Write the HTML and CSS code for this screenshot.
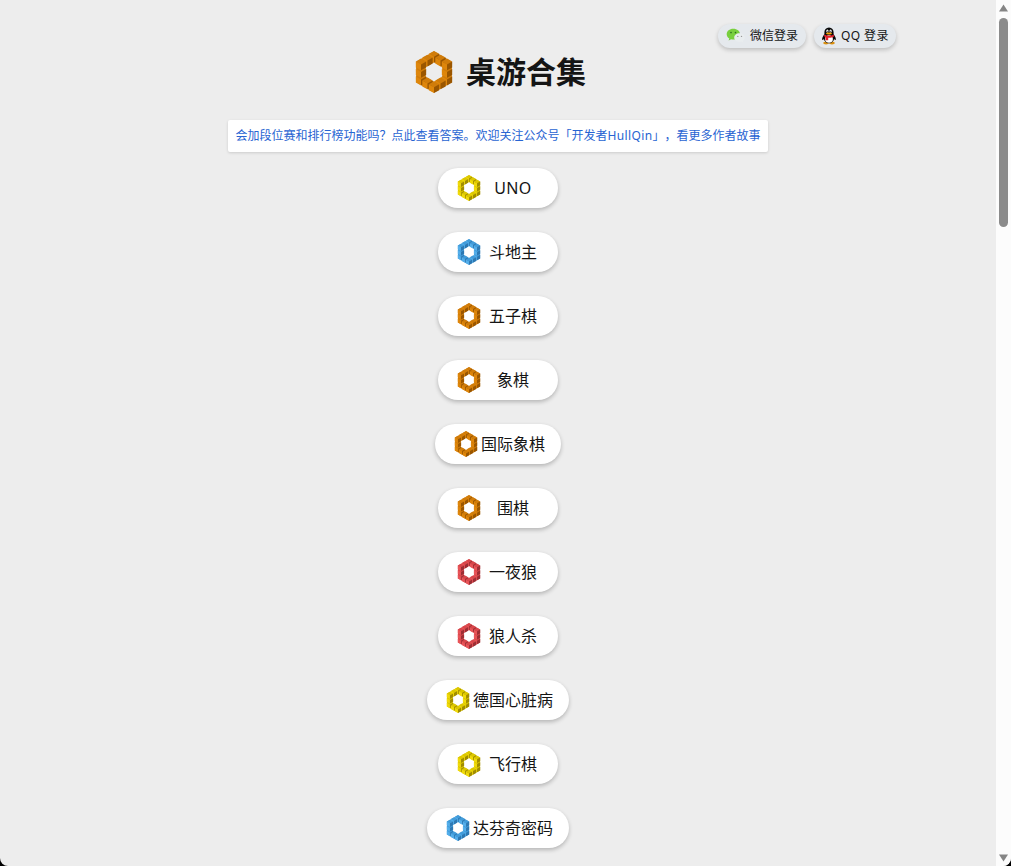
FILE: index.html
```html
<!DOCTYPE html>
<html lang="zh-CN">
<head>
  <meta charset="UTF-8" />
  <meta name="viewport" content="width=device-width, initial-scale=1.0"/>
  <title>桌游合集</title>
  <link rel="stylesheet" href="styles.css">
</head>
<body>
  <!-- shared icon: ring of twelve cubes, colours come from the class on the svg -->
  <svg class="defs" width="0" height="0">
    <symbol id="cube" viewBox="-16 -18 32 36" overflow="visible">
      <path class="top" d="M0-17.5 15.5-9 0 0-15.5-9Z"/>
      <path class="left" d="M-15.5-9 0 0V17.5L-15.5 9Z"/>
      <path class="right" d="M15.5-9 0 0V17.5L15.5 9Z"/>
    </symbol>
    <symbol id="ring" viewBox="-63 -63 126 126">
      <path class="base" fill-rule="evenodd" d="M0-62 53.500-31V31L0 62-53.500 31V-31ZM0-29-25-14.500V14.500L0 29 25 14.500V-14.500Z"/>
      <use href="#cube" x="-55" y="4.8" width="32" height="36"/>
      <use href="#cube" x="-55" y="-18" width="32" height="36"/>
      <use href="#cube" x="23" y="4.8" width="32" height="36"/>
      <use href="#cube" x="23" y="-18" width="32" height="36"/>
      <use href="#cube" x="-16" y="-63.5" width="32" height="36"/>
      <use href="#cube" x="-35.5" y="-52.2" width="32" height="36"/>
      <use href="#cube" x="3.5" y="-52.2" width="32" height="36"/>
      <use href="#cube" x="-55" y="-40.8" width="32" height="36"/>
      <use href="#cube" x="23" y="-40.8" width="32" height="36"/>
      <use href="#cube" x="-35.5" y="16.2" width="32" height="36"/>
      <use href="#cube" x="3.5" y="16.2" width="32" height="36"/>
      <use href="#cube" x="-16" y="27.5" width="32" height="36"/>
    </symbol>
  </svg>

  <main class="page">
    <div class="login">
      <button class="login-btn wechat">
        <svg width="20" height="16" viewBox="0 0 20 16">
          <path d="M7.3.8C3.5.8.7 3.1.7 6.2c0 1.8 1 3.3 2.6 4.3l-.7 2 2.5-1.2c.8.2 1.4.3 2.2.3 3.8 0 6.7-2.3 6.7-5.4S11.1.8 7.3.8Z" fill="#78cf3e"/>
          <path d="M13.5 5.2c-3 0-5.3 1.9-5.3 4.3s2.3 4.4 5.3 4.4l1.7-.3 2 1-.5-1.7c1.3-.8 2.1-2 2.1-3.4 0-2.4-2.3-4.3-5.3-4.3Z" fill="#e9edef"/>
          <circle cx="5" cy="4.6" r=".8" fill="#2d6e1e"/>
          <circle cx="9.5" cy="4.6" r=".8" fill="#2d6e1e"/>
          <circle cx="11.8" cy="8.4" r=".7" fill="#999"/>
          <circle cx="15.5" cy="8.4" r=".7" fill="#999"/>
        </svg>
        <span>微信登录</span>
      </button>
      <button class="login-btn qq">
        <svg width="16" height="18" viewBox="0 0 16 18">
          <ellipse cx="5" cy="16.1" rx="2.8" ry="1.3" fill="#d98f10"/>
          <ellipse cx="11" cy="16.1" rx="2.8" ry="1.3" fill="#d98f10"/>
          <path d="M8 .5C5 .5 3.4 2.7 3.4 5.3v2C2.2 8.8.8 11 1.2 12.8c.3.7 1.1 0 1.7-.8.5 2.7 2.3 4.2 5.1 4.2s4.6-1.5 5.1-4.2c.6.8 1.4 1.5 1.7.8.4-1.8-1-4-2.2-5.5v-2C12.6 2.7 11 .5 8 .5Z" fill="#080808"/>
          <ellipse cx="8" cy="12" rx="3.9" ry="3.8" fill="#fff"/>
          <ellipse cx="6.4" cy="4" rx="1.1" ry="1.5" fill="#fff"/>
          <ellipse cx="9.6" cy="4" rx="1.1" ry="1.5" fill="#fff"/>
          <circle cx="6.7" cy="4.2" r=".5"/>
          <circle cx="9.3" cy="4.2" r=".5"/>
          <ellipse cx="8" cy="6.5" rx="3" ry="1" fill="#f5a400"/>
          <path d="M3.3 7.6c2.6 1.6 6.8 1.6 9.4 0l.3 1.9c-2 1.2-4 1.400-5.800 1.300v2.400H4.600V10.200L3 9.300Z" fill="#e3212b"/>
        </svg>
        <span>QQ 登录</span>
      </button>
    </div>

    <h1 class="title">
      <svg class="logo orange"><use href="#ring"/></svg>
      <span>桌游合集</span>
    </h1>

    <a class="notice">会加段位赛和排行榜功能吗？点此查看答案。欢迎关注公众号「开发者<span class="latin">HullQin</span>」，看更多作者故事</a>

    <div class="games">
      <button class="game"><svg class="icon yellow"><use href="#ring"/></svg><span class="latin">UNO</span></button>
      <button class="game"><svg class="icon blue"><use href="#ring"/></svg><span>斗地主</span></button>
      <button class="game"><svg class="icon orange"><use href="#ring"/></svg><span>五子棋</span></button>
      <button class="game"><svg class="icon orange"><use href="#ring"/></svg><span>象棋</span></button>
      <button class="game"><svg class="icon orange"><use href="#ring"/></svg><span>国际象棋</span></button>
      <button class="game"><svg class="icon orange"><use href="#ring"/></svg><span>围棋</span></button>
      <button class="game"><svg class="icon red"><use href="#ring"/></svg><span>一夜狼</span></button>
      <button class="game"><svg class="icon red"><use href="#ring"/></svg><span>狼人杀</span></button>
      <button class="game"><svg class="icon yellow"><use href="#ring"/></svg><span>德国心脏病</span></button>
      <button class="game"><svg class="icon yellow"><use href="#ring"/></svg><span>飞行棋</span></button>
      <button class="game"><svg class="icon blue"><use href="#ring"/></svg><span>达芬奇密码</span></button>
    </div>
  </main>

  <div class="scrollbar">
    <svg width="11" height="8" viewBox="0 0 11 8"><path d="M5.5.6 10 7.5H1Z"/></svg>
    <div class="thumb"></div>
    <svg class="down" width="11" height="8" viewBox="0 0 11 8"><path d="M5.5 7.4 1 .5h9Z"/></svg>
  </div>
</body>
</html>
```
FILE: styles.css
```css
* {
  margin: 0;
  padding: 0;
  box-sizing: border-box;
}

html {
  background: #000;
}

body {
  display: flex;
  height: 100vh;
  overflow: hidden;
  border-radius: 0 0 8px 8px;
  background: #ededed;
  color: #151515;
  font-family: "Noto Sans", "Noto Sans CJK SC", sans-serif;
  text-spacing-trim: space-all;
}

.defs {
  position: absolute;
}

.page {
  flex: 1;
  display: flex;
  flex-direction: column;
  align-items: center;
}

button {
  border: none;
  color: inherit;
  font-family: inherit;
}

.latin {
  letter-spacing: 0.4px;
}

/* login */
.login {
  display: flex;
  gap: 8px;
  align-self: flex-end;
  height: 24px;
  margin: 24px 100px 0 0;
}

.login-btn {
  display: flex;
  align-items: center;
  height: 24px;
  padding: 0 8px;
  border-radius: 12px;
  background: #e5e9ed;
  box-shadow: 0 2px 4px rgba(0, 0, 0, 0.2);
  font-size: 12px;
  white-space: nowrap;
}

.login-btn span {
  padding-bottom: 2px;
}

.wechat {
  width: 88px;
  gap: 4px;
}

.qq {
  width: 82px;
  gap: 4px;
  padding-left: 7px;
  letter-spacing: 0.4px;
}

.login-btn svg {
  flex-shrink: 0;
}

/* title */
.title {
  display: flex;
  align-items: center;
  gap: 11px;
  height: 48px;
  margin-left: 3px;
  font-size: 30px;
  line-height: 48px;
}

.logo {
  width: 42px;
  height: 42px;
}

.notice {
  width: 540px;
  height: 32px;
  margin-top: 24px;
  border-radius: 2px;
  background: #fff;
  box-shadow: 0 1px 3px rgba(0, 0, 0, 0.14);
  color: #2864d2;
  font-size: 12px;
  line-height: 32px;
  text-align: center;
  white-space: nowrap;
}

/* games */
.games {
  display: flex;
  flex-direction: column;
  align-items: center;
  gap: 24px;
  margin-top: 16px;
}

.game {
  display: flex;
  align-items: center;
  min-width: 120px;
  height: 40px;
  padding: 0 16px;
  border-radius: 20px;
  background: #fff;
  box-shadow: 0 2px 4px rgba(0, 0, 0, 0.24);
  font-size: 16px;
  line-height: 24px;
}

.game span {
  flex: 1;
  text-align: center;
}

.icon {
  width: 30px;
  height: 26px;
}

.orange {
  --top: #d07c0a;
  --left: #de860b;
  --right: #9a5600;
}

.yellow {
  --top: #dcc700;
  --left: #f0da0a;
  --right: #a08c00;
}

.blue {
  --top: #429cda;
  --left: #54aeea;
  --right: #2d78b2;
}

.red {
  --top: #d8474b;
  --left: #e85458;
  --right: #9c2e34;
}

.top,
.base {
  fill: var(--top);
}

.left {
  fill: var(--left);
}

.right {
  fill: var(--right);
}

/* scrollbar */
.scrollbar {
  display: flex;
  flex-direction: column;
  align-items: center;
  width: 15px;
  padding: 4px 0;
  background: #fcfcfc;
}

.scrollbar svg {
  fill: #858585;
}

.thumb {
  width: 9px;
  height: 209px;
  margin-top: 6px;
  border-radius: 5px;
  background: #8b8b8b;
}

.down {
  margin-top: auto;
}
```
